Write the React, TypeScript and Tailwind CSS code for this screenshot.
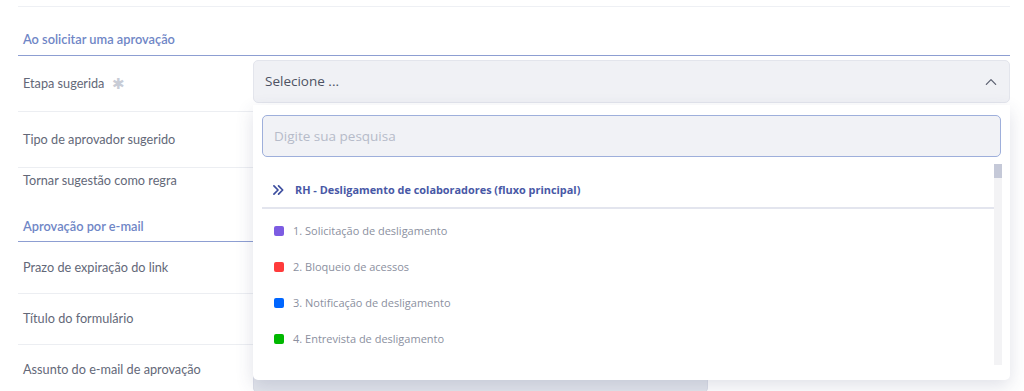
import React from "react";

const items = [
  { label: "1. Solicitação de desligamento", color: "bg-[#7c5ce2]" },
  { label: "2. Bloqueio de acessos", color: "bg-[#ff3b3b]" },
  { label: "3. Notificação de desligamento", color: "bg-[#0066ff]" },
  { label: "4. Entrevista de desligamento", color: "bg-[#00b800]" },
];

function Label({ children, h }: { children: React.ReactNode; h: string }) {
  return (
    <div className={`w-[235px] shrink-0 flex items-center pl-[5px] text-[12.7px] text-[#636878] ${h}`}>
      {children}
    </div>
  );
}

export default function App() {
  return (
    <div className="relative w-[1024px] h-[391px] overflow-hidden bg-white font-['Lato','Noto_Sans',sans-serif]">
      <div className="pl-[18px] pr-[14px]">
        <div className="h-[6px]" />
        <div className="h-px bg-[#eef0f4]" />
        {/* Section 1 */}
        <div className="pt-[24px] pb-[8px] pl-[5px] border-b border-[#8d9ed2] text-[12.8px] leading-[16px] font-semibold text-[#6f86c6]">
          Ao solicitar uma aprovação
        </div>
        {/* Row 1 */}
        <div className="flex border-b border-[#eceef2]">
          <Label h="h-[55px]">
            Etapa sugerida
            <span className="ml-[8px] text-[15px] text-[#c8ccd6]">✱</span>
          </Label>
          <div className="flex-1 pt-[4px]">
            <div className="h-[43px] rounded-[5px] border border-[#e3e5ec] bg-[#f0f1f5] flex items-center justify-between pl-[11px] pr-[10px] font-['Open_Sans',sans-serif] text-[13.5px] text-[#4d5263]">
              <span>Selecione ...</span>
              <svg width="16" height="16" viewBox="0 0 24 24" fill="none" stroke="#5b6070" strokeWidth="1.9" strokeLinecap="round" strokeLinejoin="round">
                <path d="M5 15.5l7-7 7 7" />
              </svg>
            </div>
          </div>
        </div>
        {/* Row 2 */}
        <div className="flex border-b border-[#eceef2]">
          <Label h="h-[55px]">Tipo de aprovador sugerido</Label>
          <div className="flex-1 pt-[4px]">
            <div className="h-[43px] rounded-[5px] border border-[#e3e5ec] bg-[#f0f1f5]" />
          </div>
        </div>
        {/* Row 3 */}
        <div className="flex">
          <Label h="h-[26px]">Tornar sugestão como regra</Label>
        </div>
        {/* Section 2 */}
        <div className="pt-[24px] pb-[7px] pl-[5px] border-b border-[#8d9ed2] text-[12.8px] leading-[16px] font-semibold text-[#6f86c6]">
          Aprovação por e-mail
        </div>
        {/* Row 4 */}
        <div className="flex border-b border-[#eceef2]">
          <Label h="h-[51px]">Prazo de expiração do link</Label>
          <div className="flex-1 pt-[5px]">
            <div className="h-[40px] w-[455px] rounded-[5px] border border-[#dfe2ea] bg-[#e6e8ee]" />
          </div>
        </div>
        {/* Row 5 */}
        <div className="flex border-b border-[#eceef2]">
          <Label h="h-[50px]">Título do formulário</Label>
          <div className="flex-1 pt-[5px]">
            <div className="h-[40px] rounded-[5px] border border-[#dfe2ea] bg-[#e6e8ee]" />
          </div>
        </div>
        {/* Row 6 */}
        <div className="flex">
          <Label h="h-[50px]">Assunto do e-mail de aprovação</Label>
          <div className="flex-1 pt-[4px]">
            <div className="h-[44px] w-[455px] rounded-[5px] border border-[#d9dce6] bg-[#e1e4eb]" />
          </div>
        </div>
      </div>

      {/* Dropdown panel */}
      <div className="absolute left-[253px] top-[105px] w-[757px] h-[275px] bg-white rounded-b-[5px] shadow-[0_6px_18px_rgba(60,70,110,0.16)] font-['Open_Sans',sans-serif]">
        <div className="px-[9px] pt-[10px]">
          <div className="h-[42px] rounded-[5px] border-[1.5px] border-[#9eafdb] bg-[#f1f2f6] flex items-center pl-[11px] text-[13.5px] text-[#b6bbc9]">
            Digite sua pesquisa
          </div>
        </div>
        <div className="flex pl-[9px] pr-[8px] pt-[7px]">
          <div className="flex-1">
            <div className="h-[45px] pt-[9px] border-b-2 border-[#e3e5ee] flex items-center pl-[9px]">
              <svg width="14" height="14" viewBox="0 0 24 24" fill="none" stroke="#3e4fa0" strokeWidth="3" strokeLinecap="round" strokeLinejoin="round">
                <path d="M5 5l7 7-7 7" />
                <path d="M13 5l7 7-7 7" />
              </svg>
              <span className="ml-[10px] text-[10.9px] font-bold text-[#4858a6]">
                RH - Desligamento de colaboradores (fluxo principal)
              </span>
            </div>
            <div className="pt-[4px]">
              {items.map((it) => (
                <div key={it.label} className="h-[36px] flex items-center pl-[12px]">
                  <span className={`w-[10px] h-[10px] rounded-[2px] ${it.color}`} />
                  <span className="ml-[9px] text-[11px] text-[#8b90a0]">{it.label}</span>
                </div>
              ))}
            </div>
          </div>
          <div className="w-[8px] h-[201px] bg-[#f3f3f5]">
            <div className="h-[14px] bg-[#c5c9d8]" />
          </div>
        </div>
      </div>
    </div>
  );
}
